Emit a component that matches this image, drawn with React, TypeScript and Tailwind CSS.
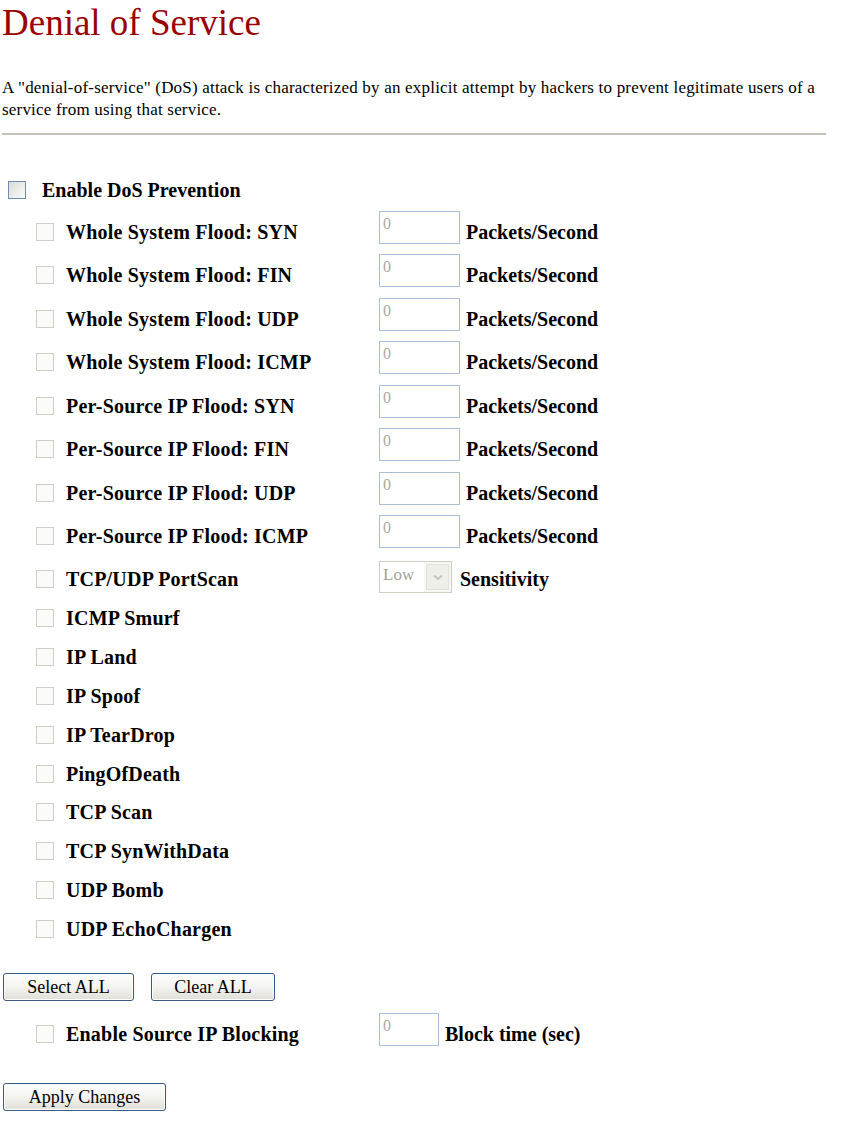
import React from 'react';

const floodRows = [
  'Whole System Flood: SYN',
  'Whole System Flood: FIN',
  'Whole System Flood: UDP',
  'Whole System Flood: ICMP',
  'Per-Source IP Flood: SYN',
  'Per-Source IP Flood: FIN',
  'Per-Source IP Flood: UDP',
  'Per-Source IP Flood: ICMP',
];

const plainRows = [
  'ICMP Smurf',
  'IP Land',
  'IP Spoof',
  'IP TearDrop',
  'PingOfDeath',
  'TCP Scan',
  'TCP SynWithData',
  'UDP Bomb',
  'UDP EchoChargen',
];

const Box = ({ active = false }: { active?: boolean }) => (
  <span
    className={
      active
        ? 'w-[18px] h-[18px] shrink-0 border border-[#6e8db3] bg-gradient-to-br from-[#dcdcdc] to-[#fbfbfb]'
        : 'w-[18px] h-[18px] shrink-0 border border-[#cfcdc4] bg-[#fbfbf9]'
    }
  />
);

const NumBox = ({ width = 'w-[81px]' }: { width?: string }) => (
  <span className={`${width} h-[33px] mb-[9px] border border-[#a9bfd8] bg-white pl-[3px] pt-[3px] text-[16px] leading-[18px] text-[#aaa9a0]`}>
    0
  </span>
);

const Label = ({ text }: { text: string }) => (
  <span className="ml-[12px] text-[20px] tracking-[0.2px] font-bold text-black">{text}</span>
);

const Btn = ({ text, width }: { text: string; width: string }) => (
  <button
    type="button"
    className={`${width} h-[28px] rounded-[3px] border border-[#3a5882] bg-gradient-to-b from-[#fefefe] via-[#f3f3f0] to-[#e0dfd8] text-[18px] leading-none text-black shadow-[inset_0_0_0_1px_#ffffff]`}
  >
    {text}
  </button>
);

const App: React.FC = () => {
  return (
    <div className="w-[842px] min-h-[1121px] bg-white px-[2px] font-['Liberation_Serif'] text-black">
      {/* Header */}
      <h1 className="mt-[2px] text-[37px] leading-[42px] font-normal text-[#990000]">Denial of Service</h1>
      <p className="mt-[33px] w-[824px] text-[17px] tracking-[0.2px] leading-[22px]">
        A "denial-of-service" (DoS) attack is characterized by an explicit attempt by hackers to prevent legitimate users of a service from using that service.
      </p>
      <div className="mt-[12px] w-[824px] h-[2px] bg-[#c6c3b8]" />

      {/* Options */}
      <div className="mt-[35px] flex flex-col">
        <div className="h-[40px] flex items-center pl-[6px]">
          <Box active />
          <span className="ml-[16px] text-[20px] font-bold">Enable DoS Prevention</span>
        </div>

        {floodRows.map((r) => (
          <div key={r} className="h-[43.5px] flex items-center">
            <div className="w-[377px] flex items-center pl-[34px]">
              <Box />
              <Label text={r} />
            </div>
            <NumBox />
            <span className="ml-[6px] text-[20px] font-bold">Packets/Second</span>
          </div>
        ))}

        <div className="h-[41px] flex items-center">
          <div className="w-[377px] flex items-center pl-[34px]">
            <Box />
            <Label text="TCP/UDP PortScan" />
          </div>
          <span className="w-[73px] h-[32px] mb-[3px] flex border border-[#cfcdc2] bg-[#f7f7f3]">
            <span className="flex-1 bg-white pl-[3px] pt-[3px] text-[17px] leading-[20px] text-[#a3a297]">Low</span>
            <span className="w-[23px] m-[2px] flex items-center justify-center border border-[#e2e1da] bg-[#efefea]">
              <svg width="10" height="7" viewBox="0 0 10 7">
                <path d="M1 1.5 L5 5 L9 1.5" fill="none" stroke="#c4c3bb" strokeWidth="2" />
              </svg>
            </span>
          </span>
          <span className="ml-[8px] text-[20px] font-bold">Sensitivity</span>
        </div>

        {plainRows.map((r) => (
          <div key={r} className="h-[38.8px] flex items-center pl-[34px]">
            <Box />
            <Label text={r} />
          </div>
        ))}
      </div>

      {/* Actions */}
      <div className="mt-[25px] flex gap-[17px] pl-[1px]">
        <Btn text="Select ALL" width="w-[131px]" />
        <Btn text="Clear ALL" width="w-[124px]" />
      </div>

      <div className="mt-[11px] h-[44px] flex items-center">
        <div className="w-[377px] flex items-center pl-[34px]">
          <Box />
          <Label text="Enable Source IP Blocking" />
        </div>
        <NumBox width="w-[60px]" />
        <span className="ml-[6px] text-[20px] font-bold">Block time (sec)</span>
      </div>

      <div className="mt-[27px] pl-[1px]">
        <Btn text="Apply Changes" width="w-[163px]" />
      </div>
    </div>
  );
};

export default App;
